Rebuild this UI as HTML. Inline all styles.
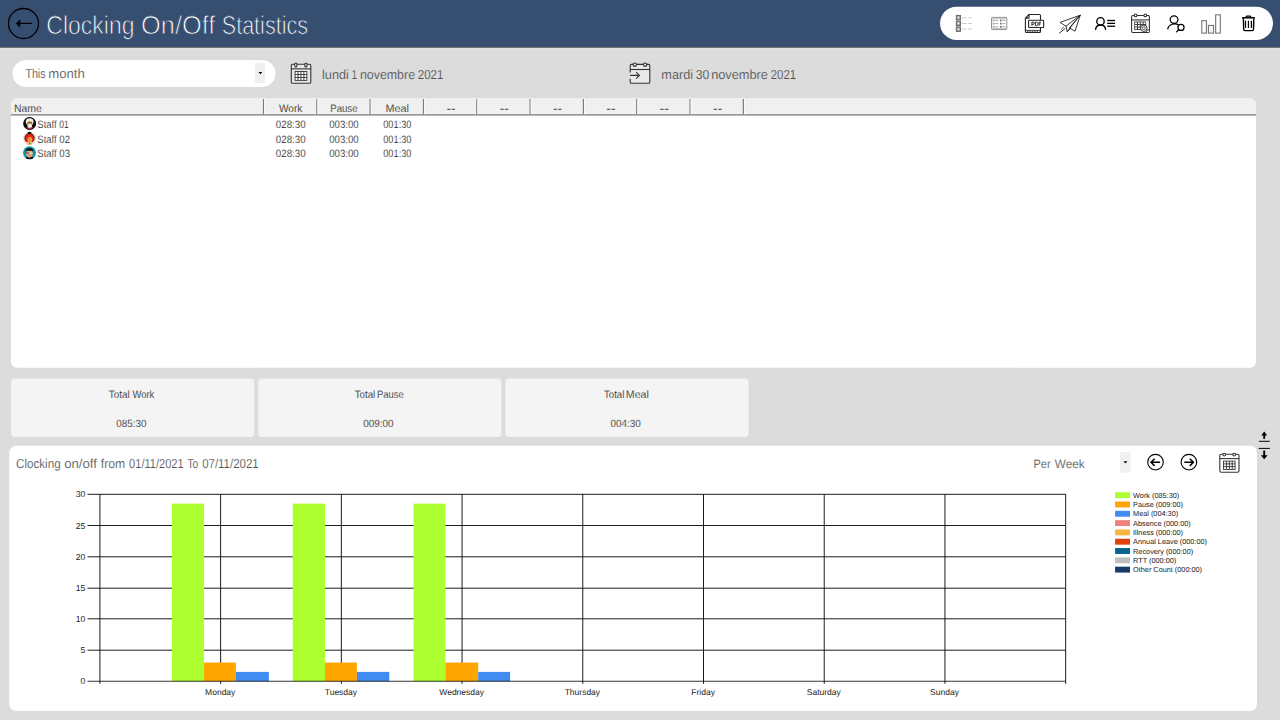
<!DOCTYPE html>
<html><head><meta charset="utf-8"><title>Clocking On/Off Statistics</title>
<style>
html,body{margin:0;padding:0;width:1280px;height:720px;overflow:hidden;background:#dcdcdc;}
svg{display:block;position:absolute;left:0;top:0;}
svg text{font-family:"Liberation Sans",sans-serif;text-rendering:geometricPrecision;}
</style></head><body>
<svg width="1280" height="720" viewBox="0 0 1280 720">
<rect x="0" y="0" width="1280" height="720" fill="#dcdcdc"/>
<rect x="0" y="0" width="1280" height="47" fill="#364e70"/>
<rect x="0" y="47" width="1280" height="1" fill="#78746f"/>
<rect x="0" y="48" width="1280" height="2" fill="#e0e0e0"/>
<circle cx="23.5" cy="23.5" r="15" fill="none" stroke="#000" stroke-width="1.3"/>
<path d="M17 23.4H32" stroke="#000" stroke-width="1.2" fill="none"/>
<path d="M15.8 23.4L20.2 19.2V27.6Z" fill="#000"/>
<text x="46.37" y="34" font-size="26" fill="#fff" textLength="88.07" lengthAdjust="spacingAndGlyphs" stroke="#364e70" stroke-width="0.85">Clocking</text>
<text x="141.02" y="34" font-size="26" fill="#fff" textLength="74.33" lengthAdjust="spacingAndGlyphs" stroke="#364e70" stroke-width="0.85">On/Off</text>
<text x="221.77" y="34" font-size="26" fill="#fff" textLength="86.24" lengthAdjust="spacingAndGlyphs" stroke="#364e70" stroke-width="0.85">Statistics</text>
<rect x="940" y="6.7" width="333" height="33.3" rx="16.65" fill="#fff"/>
<g fill="#9c9c9c" stroke="#606060" stroke-width="0.9">
<rect x="956.3" y="15.4" width="4.2" height="4.5"/>
<path d="M957.3 17.65H959.5M958.4 16.5V18.8" stroke="#eee" stroke-width="0.8"/>
<rect x="956.3" y="21.1" width="4.2" height="4.5"/>
<path d="M957.3 23.35H959.5M958.4 22.200000000000003V24.5" stroke="#eee" stroke-width="0.8"/>
<rect x="956.3" y="26.9" width="4.2" height="4.5"/>
<path d="M957.3 29.15H959.5M958.4 28.0V30.299999999999997" stroke="#eee" stroke-width="0.8"/>
</g>
<g stroke="#b4b4b4" stroke-width="1" stroke-dasharray="1.1 0.5">
<path d="M962.1 17.8H966.8M968.4 17.8H971.9"/>
<path d="M962.1 23.5H966.8M968.4 23.5H971.9"/>
<path d="M962.1 29.1H966.8M968.4 29.1H971.9"/>
</g>
<g fill="none" stroke="#868686" stroke-width="0.9">
<rect x="991.5" y="17.4" width="15.3" height="12.2" rx="0.8"/>
<path d="M991.5 18.7H1006.8M991.5 28.4H1006.8" stroke="#a8a8a8" stroke-width="0.7"/>
<path d="M994.6 20.4H998.4M1002.2 20.4H1005.6" stroke="#9a9a9a" stroke-width="0.8"/>
<circle cx="993.5" cy="20.4" r="0.75" stroke-width="0.6"/>
<rect x="1000" y="19.549999999999997" width="1.6" height="1.7" fill="#6a6a6a" stroke="none"/>
<path d="M994.6 23.6H998.4M1002.2 23.6H1005.6" stroke="#9a9a9a" stroke-width="0.8"/>
<circle cx="993.5" cy="23.6" r="0.75" stroke-width="0.6"/>
<rect x="1000" y="22.75" width="1.6" height="1.7" fill="#6a6a6a" stroke="none"/>
<path d="M994.6 26.8H998.4M1002.2 26.8H1005.6" stroke="#9a9a9a" stroke-width="0.8"/>
<circle cx="993.5" cy="26.8" r="0.75" stroke-width="0.6"/>
<rect x="1000" y="25.95" width="1.6" height="1.7" fill="#6a6a6a" stroke="none"/>
</g>
<g fill="none" stroke="#262626" stroke-width="1.1" stroke-linejoin="round">
<path d="M1029 14.5H1039.4Q1040.5 14.5 1040.5 15.6V20.2M1040.5 27.6V31.4Q1040.5 32.5 1039.4 32.5H1026.5Q1025.4 32.5 1025.4 31.4V18.1L1029 14.5V18.1H1025.4"/>
<rect x="1028.6" y="20.3" width="15" height="7.2" rx="0.6" fill="#fff"/>
<path d="M1025.4 30.4H1040.5" stroke-width="0.9"/>
<path d="M1027 31.5H1039.4" stroke-dasharray="1.5 0.9" stroke-width="0.7"/>
</g>
<path d="M1031.9 25.8V22.1H1033.2Q1034.4 22.1 1034.4 23.2Q1034.4 24.3 1033.2 24.3H1031.9M1035.4 22.1V25.8H1036.3Q1038 25.8 1038 23.95Q1038 22.1 1036.3 22.1H1035.4M1039.1 25.8V22.1H1041.1M1039.1 23.9H1040.8" fill="none" stroke="#111" stroke-width="0.85"/>
<g fill="none" stroke="#222" stroke-width="0.9" stroke-linejoin="round" stroke-linecap="round">
<path d="M1080.2 15.2L1060 22.4L1066 26.2L1080.2 15.2L1075 31.2L1069.4 27.8L1080.2 15.2L1067.2 31.5L1066 26.2"/>
<path d="M1067.2 31.5L1070.6 28.5"/>
<path d="M1059.4 33.2L1065 28.6M1061.5 29L1063.4 27.4" />
</g>
<g fill="none" stroke="#000" stroke-width="1.35" stroke-linecap="round">
<circle cx="1100.5" cy="21.4" r="3.7"/>
<path d="M1095.6 29.3C1096.4 23.5 1104.8 23.5 1105.6 29.3"/>
</g>
<g stroke="#000" stroke-width="1.3">
<path d="M1107.2 20.5H1115.1"/>
<path d="M1107.2 23.35H1115.1"/>
<path d="M1107.2 26.25H1115.1"/>
</g>
<g fill="none" stroke="#2e2e2e" stroke-width="1.05">
<rect x="1131.6" y="15.5" width="17.8" height="17" rx="1.2"/>
<path d="M1131.6 19.9H1149.4"/>
<circle cx="1135.6" cy="15.4" r="1.35" fill="#fff"/><circle cx="1145.3" cy="15.4" r="1.35" fill="#fff"/>
</g>
<rect x="1134.3" y="21.5" width="11.9" height="8.5" fill="#333"/>
<rect x="1135.10" y="22.30" width="1.9" height="1.7" fill="#fff"/>
<rect x="1137.95" y="22.30" width="1.9" height="1.7" fill="#fff"/>
<rect x="1140.80" y="22.30" width="1.9" height="1.7" fill="#fff"/>
<rect x="1143.65" y="22.30" width="1.9" height="1.7" fill="#fff"/>
<rect x="1135.10" y="24.90" width="1.9" height="1.7" fill="#fff"/>
<rect x="1137.95" y="24.90" width="1.9" height="1.7" fill="#fff"/>
<rect x="1140.80" y="24.90" width="1.9" height="1.7" fill="#fff"/>
<rect x="1143.65" y="24.90" width="1.9" height="1.7" fill="#fff"/>
<rect x="1135.10" y="27.50" width="1.9" height="1.7" fill="#fff"/>
<rect x="1137.95" y="27.50" width="1.9" height="1.7" fill="#fff"/>
<rect x="1140.80" y="27.50" width="1.9" height="1.7" fill="#fff"/>
<rect x="1143.65" y="27.50" width="1.9" height="1.7" fill="#fff"/>
<g stroke="#2e2e2e" stroke-width="0.9" fill="#fff">
<circle cx="1148.1" cy="31.2" r="1.5"/>
<circle cx="1143.8" cy="28.3" r="3.2"/>
<circle cx="1143.8" cy="28.3" r="1.5" stroke-width="0.8"/>
</g>
<g fill="none" stroke="#000" stroke-width="1.25" stroke-linecap="round">
<circle cx="1174.05" cy="19.6" r="3.85"/>
<path d="M1167.8 28.8C1168.6 24.2 1175.6 22.6 1178.4 24.9"/>
<circle cx="1181" cy="27.4" r="3.05"/>
<path d="M1178.7 29.7L1176.5 31.9"/>
</g>
<g fill="#fdfdfd" stroke="#767676" stroke-width="1.1">
<rect x="1201.8" y="20.7" width="4.6" height="12.4"/>
<rect x="1208.4" y="25.4" width="5.2" height="7.7" fill="#f2f2f2"/>
<rect x="1215.65" y="14.8" width="4.7" height="18.3"/>
</g>
<g fill="none" stroke="#000" stroke-width="1.45" stroke-linejoin="round">
<path d="M1243.4 18.4L1243.7 29.3Q1243.75 30.6 1245 30.6H1252.2Q1253.45 30.6 1253.5 29.3L1253.8 18.4"/>
<path d="M1242 17.8H1254.9" stroke-width="1.5"/>
<path d="M1246.2 17.4V16.9Q1246.2 16.1 1247 16.1H1249.9Q1250.7 16.1 1250.7 16.9V17.4" stroke-width="1.2"/>
<path d="M1245.55 20.8V28M1248.45 20.8V28M1251.4 20.8V28" stroke-width="1.2"/>
</g>
<rect x="12.5" y="60" width="263" height="27" rx="13.5" fill="#fff"/>
<rect x="254.9" y="63.1" width="9.9" height="19.8" fill="#efefef"/>
<path d="M258.5 72H262.3L260.4 74.3Z" fill="#000"/>
<text x="25.39" y="77.75" font-size="13" fill="#525252" textLength="20.23" lengthAdjust="spacingAndGlyphs" stroke="#fff" stroke-width="0.14">This</text>
<text x="48.22" y="77.75" font-size="13" fill="#525252" textLength="36.53" lengthAdjust="spacingAndGlyphs" stroke="#fff" stroke-width="0.14">month</text>
<g fill="none" stroke="#333" stroke-width="1.1">
<rect x="291.3" y="64.2" width="19.5" height="19.1" rx="1.4" fill="#e9e9e9"/>
<path d="M291.3 68.88H310.8"/>
<ellipse cx="295.82" cy="65.10000000000001" rx="1.2" ry="2" fill="#eee"/><ellipse cx="305.89" cy="65.10000000000001" rx="1.2" ry="2" fill="#eee"/>
</g>
<rect x="294.62" y="71.08" width="12.68" height="9.74" fill="#333"/>
<rect x="295.51" y="71.98" width="2.04" height="2.05" fill="#fff"/>
<rect x="298.46" y="71.98" width="2.04" height="2.05" fill="#fff"/>
<rect x="301.40" y="71.98" width="2.04" height="2.05" fill="#fff"/>
<rect x="304.35" y="71.98" width="2.04" height="2.05" fill="#fff"/>
<rect x="295.51" y="74.92" width="2.04" height="2.05" fill="#fff"/>
<rect x="298.46" y="74.92" width="2.04" height="2.05" fill="#fff"/>
<rect x="301.40" y="74.92" width="2.04" height="2.05" fill="#fff"/>
<rect x="304.35" y="74.92" width="2.04" height="2.05" fill="#fff"/>
<rect x="295.51" y="77.87" width="2.04" height="2.05" fill="#fff"/>
<rect x="298.46" y="77.87" width="2.04" height="2.05" fill="#fff"/>
<rect x="301.40" y="77.87" width="2.04" height="2.05" fill="#fff"/>
<rect x="304.35" y="77.87" width="2.04" height="2.05" fill="#fff"/>
<text x="322.04" y="78.75" font-size="13" fill="#525252" textLength="26.81" lengthAdjust="spacingAndGlyphs" stroke="#dcdcdc" stroke-width="0.14">lundi</text>
<text x="351.73" y="78.75" font-size="13" fill="#525252" textLength="5.17" lengthAdjust="spacingAndGlyphs" stroke="#dcdcdc" stroke-width="0.14">1</text>
<text x="359.88" y="78.75" font-size="13" fill="#525252" textLength="55.19" lengthAdjust="spacingAndGlyphs" stroke="#dcdcdc" stroke-width="0.14">novembre</text>
<text x="417.83" y="78.75" font-size="13" fill="#525252" textLength="25.59" lengthAdjust="spacingAndGlyphs" stroke="#dcdcdc" stroke-width="0.14">2021</text>
<g fill="none" stroke="#333" stroke-width="1.1">
<path d="M630.2 72.4V65.7Q630.2 64.4 631.5 64.4H648.5Q649.8 64.4 649.8 65.7V82Q649.8 83.3 648.5 83.3H631.5Q630.2 83.3 630.2 82V78.8" fill="#e9e9e9" />
<path d="M630.2 69.5H649.8"/>
<circle cx="634.8" cy="64.7" r="1.7" fill="#e0e0e0"/><circle cx="645.1" cy="64.7" r="1.7" fill="#e0e0e0"/>
<path d="M630 75.4H639.3M636.1 72.1L639.4 75.4L636.1 78.7"/>
</g>
<text x="661.34" y="78.75" font-size="13" fill="#525252" textLength="31.75" lengthAdjust="spacingAndGlyphs" stroke="#dcdcdc" stroke-width="0.14">mardi</text>
<text x="695.72" y="78.75" font-size="13" fill="#525252" textLength="13.51" lengthAdjust="spacingAndGlyphs" stroke="#dcdcdc" stroke-width="0.14">30</text>
<text x="711.13" y="78.75" font-size="13" fill="#525252" textLength="56.85" lengthAdjust="spacingAndGlyphs" stroke="#dcdcdc" stroke-width="0.14">novembre</text>
<text x="770.73" y="78.75" font-size="13" fill="#525252" textLength="25.38" lengthAdjust="spacingAndGlyphs" stroke="#dcdcdc" stroke-width="0.14">2021</text>
<rect x="11" y="98.5" width="1245" height="269.3" rx="6" fill="#fff"/>
<path d="M11 114.4V105.5Q11 98.5 18 98.5H1249Q1256 98.5 1256 105.5V114.4Z" fill="#f0f0f0"/>
<rect x="11" y="113.2" width="1245" height="0.9" fill="#f8f8f8"/>
<rect x="11" y="114.1" width="1245" height="1.5" fill="#8a8a8a"/>
<rect x="262.90" y="99" width="1.25" height="15.2" fill="#7c7c7c"/>
<rect x="264.10" y="99" width="1" height="15.2" fill="#fbfbfb"/>
<rect x="316.22" y="99" width="1.25" height="15.2" fill="#7c7c7c"/>
<rect x="317.42" y="99" width="1" height="15.2" fill="#fbfbfb"/>
<rect x="369.54" y="99" width="1.25" height="15.2" fill="#7c7c7c"/>
<rect x="370.74" y="99" width="1" height="15.2" fill="#fbfbfb"/>
<rect x="422.86" y="99" width="1.25" height="15.2" fill="#7c7c7c"/>
<rect x="424.06" y="99" width="1" height="15.2" fill="#fbfbfb"/>
<rect x="476.18" y="99" width="1.25" height="15.2" fill="#7c7c7c"/>
<rect x="477.38" y="99" width="1" height="15.2" fill="#fbfbfb"/>
<rect x="529.50" y="99" width="1.25" height="15.2" fill="#7c7c7c"/>
<rect x="530.70" y="99" width="1" height="15.2" fill="#fbfbfb"/>
<rect x="582.82" y="99" width="1.25" height="15.2" fill="#7c7c7c"/>
<rect x="584.02" y="99" width="1" height="15.2" fill="#fbfbfb"/>
<rect x="636.14" y="99" width="1.25" height="15.2" fill="#7c7c7c"/>
<rect x="637.34" y="99" width="1" height="15.2" fill="#fbfbfb"/>
<rect x="689.46" y="99" width="1.25" height="15.2" fill="#7c7c7c"/>
<rect x="690.66" y="99" width="1" height="15.2" fill="#fbfbfb"/>
<rect x="742.78" y="99" width="1.25" height="15.2" fill="#7c7c7c"/>
<rect x="743.98" y="99" width="1" height="15.2" fill="#fbfbfb"/>
<text x="13.96" y="111.5" font-size="10.8" fill="#1c1c1c" textLength="27.82" lengthAdjust="spacingAndGlyphs" stroke="#f0f0f0" stroke-width="0.15">Name</text>
<text x="279.00" y="111.5" font-size="10.8" fill="#1c1c1c" textLength="23.26" lengthAdjust="spacingAndGlyphs" stroke="#f0f0f0" stroke-width="0.15">Work</text>
<text x="330.21" y="111.5" font-size="10.8" fill="#1c1c1c" textLength="27.32" lengthAdjust="spacingAndGlyphs" stroke="#f0f0f0" stroke-width="0.15">Pause</text>
<text x="385.60" y="111.5" font-size="10.8" fill="#1c1c1c" textLength="23.41" lengthAdjust="spacingAndGlyphs" stroke="#f0f0f0" stroke-width="0.15">Meal</text>
<text x="446.47" y="111.6" font-size="10.5" fill="#111" textLength="9.02" lengthAdjust="spacingAndGlyphs">--</text>
<text x="499.77" y="111.6" font-size="10.5" fill="#111" textLength="9.02" lengthAdjust="spacingAndGlyphs">--</text>
<text x="553.06" y="111.6" font-size="10.5" fill="#111" textLength="9.02" lengthAdjust="spacingAndGlyphs">--</text>
<text x="606.28" y="111.6" font-size="10.5" fill="#111" textLength="9.38" lengthAdjust="spacingAndGlyphs">--</text>
<text x="659.57" y="111.6" font-size="10.5" fill="#111" textLength="9.32" lengthAdjust="spacingAndGlyphs">--</text>
<text x="713.14" y="111.6" font-size="10.5" fill="#111" textLength="9.02" lengthAdjust="spacingAndGlyphs">--</text>
<text x="37.34" y="128.1" font-size="10.6" fill="#1c1c1c" textLength="19.27" lengthAdjust="spacingAndGlyphs" stroke="#fff" stroke-width="0.15">Staff</text>
<text x="59.32" y="128.1" font-size="10.6" fill="#1c1c1c" textLength="9.48" lengthAdjust="spacingAndGlyphs" stroke="#fff" stroke-width="0.15">01</text>
<text x="275.79" y="128.1" font-size="10.6" fill="#1c1c1c" textLength="29.82" lengthAdjust="spacingAndGlyphs" stroke="#fff" stroke-width="0.15">028:30</text>
<text x="329.14" y="128.1" font-size="10.6" fill="#1c1c1c" textLength="29.63" lengthAdjust="spacingAndGlyphs" stroke="#fff" stroke-width="0.15">003:00</text>
<text x="383.24" y="128.1" font-size="10.6" fill="#1c1c1c" textLength="28.22" lengthAdjust="spacingAndGlyphs" stroke="#fff" stroke-width="0.15">001:30</text>
<text x="37.34" y="142.7" font-size="10.6" fill="#1c1c1c" textLength="19.27" lengthAdjust="spacingAndGlyphs" stroke="#fff" stroke-width="0.15">Staff</text>
<text x="59.32" y="142.7" font-size="10.6" fill="#1c1c1c" textLength="10.79" lengthAdjust="spacingAndGlyphs" stroke="#fff" stroke-width="0.15">02</text>
<text x="275.79" y="142.7" font-size="10.6" fill="#1c1c1c" textLength="29.82" lengthAdjust="spacingAndGlyphs" stroke="#fff" stroke-width="0.15">028:30</text>
<text x="329.14" y="142.7" font-size="10.6" fill="#1c1c1c" textLength="29.63" lengthAdjust="spacingAndGlyphs" stroke="#fff" stroke-width="0.15">003:00</text>
<text x="383.24" y="142.7" font-size="10.6" fill="#1c1c1c" textLength="28.22" lengthAdjust="spacingAndGlyphs" stroke="#fff" stroke-width="0.15">001:30</text>
<text x="37.34" y="157.3" font-size="10.6" fill="#1c1c1c" textLength="19.27" lengthAdjust="spacingAndGlyphs" stroke="#fff" stroke-width="0.15">Staff</text>
<text x="59.32" y="157.3" font-size="10.6" fill="#1c1c1c" textLength="10.77" lengthAdjust="spacingAndGlyphs" stroke="#fff" stroke-width="0.15">03</text>
<text x="275.79" y="157.3" font-size="10.6" fill="#1c1c1c" textLength="29.82" lengthAdjust="spacingAndGlyphs" stroke="#fff" stroke-width="0.15">028:30</text>
<text x="329.14" y="157.3" font-size="10.6" fill="#1c1c1c" textLength="29.63" lengthAdjust="spacingAndGlyphs" stroke="#fff" stroke-width="0.15">003:00</text>
<text x="383.24" y="157.3" font-size="10.6" fill="#1c1c1c" textLength="28.22" lengthAdjust="spacingAndGlyphs" stroke="#fff" stroke-width="0.15">001:30</text>
<g><circle cx="29.65" cy="123.5" r="6.5" fill="#0a0a0a"/>
<clipPath id="c1"><circle cx="29.65" cy="123.5" r="5.7"/></clipPath><g clip-path="url(#c1)">
<rect x="26.45" y="127.1" width="6.4" height="3" fill="#c4161c"/>
<rect x="28.95" y="127.3" width="1.4" height="2.6" fill="#2a6fdb"/>
<ellipse cx="29.65" cy="121.7" rx="3.9" ry="3.4" fill="#f2f2f2"/>
<ellipse cx="29.849999999999998" cy="123.3" rx="2.7" ry="2.6" fill="#d9a45c"/>
<rect x="27.45" y="122.3" width="4.6" height="1.1" fill="#6b5a2a"/>
<ellipse cx="29.75" cy="125.9" rx="2.4" ry="1.9" fill="#f4f0ec"/>
</g></g>
<g><circle cx="29.55" cy="138.3" r="6.5" fill="#fbd5cb"/>
<clipPath id="c2"><circle cx="29.55" cy="138.3" r="6.5"/></clipPath><g clip-path="url(#c2)">
<circle cx="29.55" cy="133.10000000000002" r="1.9" fill="#161616"/>
<ellipse cx="29.55" cy="138.10000000000002" rx="5.1" ry="4.9" fill="#1a1212"/>
<ellipse cx="29.55" cy="138.3" rx="4.5" ry="4.3" fill="#e8200f"/>
<path d="M27.35 141.70000000000002L24.950000000000003 144.9H34.15L31.75 141.70000000000002Z" fill="#fbd5cb"/>
<rect x="27.25" y="142.70000000000002" width="4.6" height="2.2" fill="#f2b233"/>
<rect x="29.05" y="142.5" width="1.5" height="1.8" fill="#1f9c8c"/>
<ellipse cx="29.85" cy="139.60000000000002" rx="2.4" ry="2.7" fill="#f7a93e"/>
<rect x="28.25" y="138.60000000000002" width="3.2" height="0.7" fill="#a8702a"/>
<ellipse cx="29.85" cy="141.0" rx="0.9" ry="0.45" fill="#f0506a"/>
</g></g>
<g><circle cx="29.5" cy="152.8" r="6.5" fill="#0c98a6"/>
<clipPath id="c3"><circle cx="29.5" cy="152.8" r="6.5"/></clipPath><g clip-path="url(#c3)">
<rect x="25.9" y="157.0" width="7.2" height="3" fill="#151515"/>
<rect x="28.9" y="157.0" width="1.2" height="1.2" fill="#a06ad0"/>
<ellipse cx="29.5" cy="153.60000000000002" rx="3.3" ry="3.7" fill="#e9a877"/>
<path d="M25.5 151.8Q25.3 148.0 29.5 148.0Q33.7 148.0 33.5 151.8L32.0 150.8H27.0Z" fill="#141414"/>
<rect x="26.9" y="152.20000000000002" width="2.2" height="1.8" fill="#7b7b7b"/><rect x="29.7" y="152.20000000000002" width="2.4" height="1.8" fill="#d8d0c0"/>
<rect x="25.7" y="152.0" width="1.2" height="1.6" fill="#d8402a"/>
<ellipse cx="29.5" cy="155.8" rx="0.9" ry="0.45" fill="#c22a4a"/>
</g></g>
<rect x="11" y="378.6" width="243.2" height="58.4" rx="4" fill="#f4f4f4"/>
<rect x="258.2" y="378.6" width="243.2" height="58.4" rx="4" fill="#f4f4f4"/>
<rect x="505.4" y="378.6" width="243.2" height="58.4" rx="4" fill="#f4f4f4"/>
<text x="108.74" y="397.75" font-size="10.8" fill="#1c1c1c" textLength="20.88" lengthAdjust="spacingAndGlyphs" stroke="#f4f4f4" stroke-width="0.15">Total</text>
<text x="132.50" y="397.75" font-size="10.8" fill="#1c1c1c" textLength="21.79" lengthAdjust="spacingAndGlyphs" stroke="#f4f4f4" stroke-width="0.15">Work</text>
<text x="116.29" y="427.3" font-size="10.5" fill="#1c1c1c" textLength="30.08" lengthAdjust="spacingAndGlyphs" stroke="#f4f4f4" stroke-width="0.15">085:30</text>
<text x="354.74" y="397.75" font-size="10.8" fill="#1c1c1c" textLength="20.52" lengthAdjust="spacingAndGlyphs" stroke="#f4f4f4" stroke-width="0.15">Total</text>
<text x="377.07" y="397.75" font-size="10.8" fill="#1c1c1c" textLength="26.65" lengthAdjust="spacingAndGlyphs" stroke="#f4f4f4" stroke-width="0.15">Pause</text>
<text x="363.24" y="427.3" font-size="10.5" fill="#1c1c1c" textLength="30.43" lengthAdjust="spacingAndGlyphs" stroke="#f4f4f4" stroke-width="0.15">009:00</text>
<text x="604.04" y="397.75" font-size="10.8" fill="#1c1c1c" textLength="20.32" lengthAdjust="spacingAndGlyphs" stroke="#f4f4f4" stroke-width="0.15">Total</text>
<text x="625.76" y="397.75" font-size="10.8" fill="#1c1c1c" textLength="23.10" lengthAdjust="spacingAndGlyphs" stroke="#f4f4f4" stroke-width="0.15">Meal</text>
<text x="610.49" y="427.3" font-size="10.5" fill="#1c1c1c" textLength="30.23" lengthAdjust="spacingAndGlyphs" stroke="#f4f4f4" stroke-width="0.15">004:30</text>
<g stroke="#000" fill="none">
<path d="M1264.2 438.8V434.5M1264.2 450.6V456" stroke-width="1.9"/>
<path d="M1258.9 441.3H1269.7M1258.7 448.4H1269.9" stroke-width="1"/>
</g>
<path d="M1264.2 431.5L1267.2 435.6H1261.2Z M1264.2 459.3L1267.6 455.2H1260.8Z" fill="#000"/>
<rect x="9.3" y="445.7" width="1247.7" height="265.3" rx="7" fill="#fff"/>
<text x="15.99" y="467.9" font-size="13" fill="#525252" textLength="44.68" lengthAdjust="spacingAndGlyphs" stroke="#fff" stroke-width="0.14">Clocking</text>
<text x="64.18" y="467.9" font-size="13" fill="#525252" textLength="32.79" lengthAdjust="spacingAndGlyphs" stroke="#fff" stroke-width="0.14">on/off</text>
<text x="100.75" y="467.9" font-size="13" fill="#525252" textLength="24.33" lengthAdjust="spacingAndGlyphs" stroke="#fff" stroke-width="0.14">from</text>
<text x="129.10" y="467.9" font-size="13" fill="#525252" textLength="54.50" lengthAdjust="spacingAndGlyphs" stroke="#fff" stroke-width="0.14">01/11/2021</text>
<text x="187.54" y="467.9" font-size="13" fill="#525252" textLength="10.75" lengthAdjust="spacingAndGlyphs" stroke="#fff" stroke-width="0.14">To</text>
<text x="202.14" y="467.9" font-size="13" fill="#525252" textLength="56.62" lengthAdjust="spacingAndGlyphs" stroke="#fff" stroke-width="0.14">07/11/2021</text>
<text x="1033.61" y="467.5" font-size="12.2" fill="#525252" textLength="16.95" lengthAdjust="spacingAndGlyphs" stroke="#fff" stroke-width="0.14">Per</text>
<text x="1054.84" y="467.5" font-size="12.2" fill="#525252" textLength="29.81" lengthAdjust="spacingAndGlyphs" stroke="#fff" stroke-width="0.14">Week</text>
<rect x="1120.1" y="452" width="10.5" height="20.6" fill="#f0f0f0"/>
<path d="M1123.6 461.2H1127.3L1125.45 463.5Z" fill="#000"/>
<circle cx="1155.5" cy="462.2" r="7.8" fill="none" stroke="#000" stroke-width="1.1"/>
<path d="M1160.1 462.3H1151.3M1154.6 458.7L1151.0 462.3L1154.6 465.9" fill="none" stroke="#000" stroke-width="1.5"/>
<circle cx="1188.9" cy="462.2" r="7.8" fill="none" stroke="#000" stroke-width="1.1"/>
<path d="M1184.3000000000002 462.3H1193.1000000000001M1189.8000000000002 458.7L1193.4 462.3L1189.8000000000002 465.9" fill="none" stroke="#000" stroke-width="1.5"/>
<g fill="none" stroke="#333" stroke-width="1.1">
<rect x="1219.8" y="454.2" width="19.2" height="18" rx="1.4" fill="#fff"/>
<path d="M1219.8 458.61H1239.0"/>
<circle cx="1224.25" cy="454.59999999999997" r="1.4" fill="#fff"/><circle cx="1234.16" cy="454.59999999999997" r="1.4" fill="#fff"/>
</g>
<rect x="1223.06" y="460.68" width="12.48" height="9.18" fill="#333"/>
<rect x="1223.96" y="461.58" width="2.00" height="1.86" fill="#fff"/>
<rect x="1226.86" y="461.58" width="2.00" height="1.86" fill="#fff"/>
<rect x="1229.75" y="461.58" width="2.00" height="1.86" fill="#fff"/>
<rect x="1232.65" y="461.58" width="2.00" height="1.86" fill="#fff"/>
<rect x="1223.96" y="464.34" width="2.00" height="1.86" fill="#fff"/>
<rect x="1226.86" y="464.34" width="2.00" height="1.86" fill="#fff"/>
<rect x="1229.75" y="464.34" width="2.00" height="1.86" fill="#fff"/>
<rect x="1232.65" y="464.34" width="2.00" height="1.86" fill="#fff"/>
<rect x="1223.96" y="467.10" width="2.00" height="1.86" fill="#fff"/>
<rect x="1226.86" y="467.10" width="2.00" height="1.86" fill="#fff"/>
<rect x="1229.75" y="467.10" width="2.00" height="1.86" fill="#fff"/>
<rect x="1232.65" y="467.10" width="2.00" height="1.86" fill="#fff"/>
<g stroke="#101010" stroke-width="0.95" fill="none">
<path d="M87.50 494.30H1065.66"/>
<path d="M87.50 525.50H1065.66"/>
<path d="M87.50 556.80H1065.66"/>
<path d="M87.50 588.20H1065.66"/>
<path d="M87.50 618.80H1065.66"/>
<path d="M87.50 650.20H1065.66"/>
<path d="M99.90 494.30V683.85"/>
<path d="M220.62 494.30V683.85"/>
<path d="M341.34 494.30V683.85"/>
<path d="M462.06 494.30V683.85"/>
<path d="M582.78 494.30V683.85"/>
<path d="M703.50 494.30V683.85"/>
<path d="M824.22 494.30V683.85"/>
<path d="M944.94 494.30V683.85"/>
<path d="M1065.66 494.30V683.85"/>
</g>
<rect x="172.00" y="503.65" width="32.05" height="177.60" fill="#adff2f"/>
<rect x="204.05" y="662.55" width="31.85" height="18.70" fill="#ffa500"/>
<rect x="235.90" y="671.90" width="33.00" height="9.35" fill="#418cf0"/>
<rect x="292.75" y="503.65" width="32.25" height="177.60" fill="#adff2f"/>
<rect x="325.00" y="662.55" width="31.90" height="18.70" fill="#ffa500"/>
<rect x="356.90" y="671.90" width="32.40" height="9.35" fill="#418cf0"/>
<rect x="413.50" y="503.65" width="31.90" height="177.60" fill="#adff2f"/>
<rect x="445.40" y="662.55" width="32.80" height="18.70" fill="#ffa500"/>
<rect x="478.20" y="671.90" width="31.90" height="9.35" fill="#418cf0"/>
<path d="M87.50 681.25H1065.66" stroke="#101010" stroke-width="0.85" fill="none"/>
<text x="85.4" y="497.40" font-size="8.6" fill="#1c1c1c" text-anchor="end" >30</text>
<text x="85.4" y="528.60" font-size="8.6" fill="#1c1c1c" text-anchor="end" >25</text>
<text x="85.4" y="559.90" font-size="8.6" fill="#1c1c1c" text-anchor="end" >20</text>
<text x="85.4" y="591.30" font-size="8.6" fill="#1c1c1c" text-anchor="end" >15</text>
<text x="85.4" y="621.90" font-size="8.6" fill="#1c1c1c" text-anchor="end" >10</text>
<text x="85.4" y="653.30" font-size="8.6" fill="#1c1c1c" text-anchor="end" >5</text>
<text x="85.4" y="684.35" font-size="8.6" fill="#1c1c1c" text-anchor="end" >0</text>
<text x="220.22" y="694.6" font-size="8.5" fill="#1c1c1c" text-anchor="middle" >Monday</text>
<text x="340.94" y="694.6" font-size="8.5" fill="#1c1c1c" text-anchor="middle" >Tuesday</text>
<text x="461.66" y="694.6" font-size="8.5" fill="#1c1c1c" text-anchor="middle" >Wednesday</text>
<text x="582.38" y="694.6" font-size="8.5" fill="#1c1c1c" text-anchor="middle" >Thursday</text>
<text x="703.10" y="694.6" font-size="8.5" fill="#1c1c1c" text-anchor="middle" >Friday</text>
<text x="823.82" y="694.6" font-size="8.5" fill="#1c1c1c" text-anchor="middle" >Saturday</text>
<text x="944.54" y="694.6" font-size="8.5" fill="#1c1c1c" text-anchor="middle" >Sunday</text>
<rect x="1115.1" y="492.20" width="14.9" height="5.9" fill="#adff2f"/>
<text x="1133.1" y="497.70" font-size="7.3" fill="#222" text-anchor="start" >Work (085:30)</text>
<rect x="1115.1" y="501.51" width="14.9" height="5.9" fill="#ffa500"/>
<text x="1133.1" y="507.01" font-size="7.3" fill="#222" text-anchor="start" >Pause (009:00)</text>
<rect x="1115.1" y="510.82" width="14.9" height="5.9" fill="#418cf0"/>
<text x="1133.1" y="516.32" font-size="7.3" fill="#222" text-anchor="start" >Meal (004:30)</text>
<rect x="1115.1" y="520.13" width="14.9" height="5.9" fill="#f08080"/>
<text x="1133.1" y="525.63" font-size="7.3" fill="#222" text-anchor="start" >Absence (000:00)</text>
<rect x="1115.1" y="529.44" width="14.9" height="5.9" fill="#fcb441"/>
<text x="1133.1" y="534.94" font-size="7.3" fill="#222" text-anchor="start" >Illness (000:00)</text>
<rect x="1115.1" y="538.75" width="14.9" height="5.9" fill="#e0400a"/>
<text x="1133.1" y="544.25" font-size="7.3" fill="#222" text-anchor="start" >Annual Leave (000:00)</text>
<rect x="1115.1" y="548.06" width="14.9" height="5.9" fill="#056492"/>
<text x="1133.1" y="553.56" font-size="7.3" fill="#222" text-anchor="start" >Recovery (000:00)</text>
<rect x="1115.1" y="557.37" width="14.9" height="5.9" fill="#bfbfbf"/>
<text x="1133.1" y="562.87" font-size="7.3" fill="#222" text-anchor="start" >RTT (000:00)</text>
<rect x="1115.1" y="566.68" width="14.9" height="5.9" fill="#1a3b69"/>
<text x="1133.1" y="572.18" font-size="7.3" fill="#222" text-anchor="start" >Other Count (000:00)</text>
</svg>
</body></html>
